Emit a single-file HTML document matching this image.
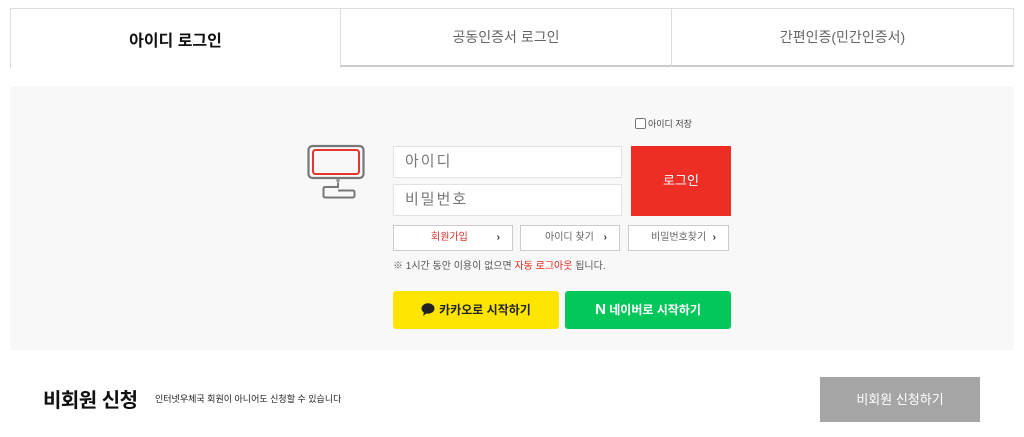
<!DOCTYPE html>
<html><head><meta charset="utf-8"><style>
*{margin:0;padding:0;box-sizing:border-box}
body{width:1024px;height:437px;background:#fff;font-family:"Liberation Sans","Noto Sans CJK KR",sans-serif;position:relative;overflow:hidden}
.a{position:absolute}
.tab{position:absolute;top:8px;height:59px;border:1px solid #ddd;display:flex;align-items:center;justify-content:center;font-size:14px;color:#666;background:#fff}
.inp{position:absolute;left:393px;width:229px;height:32px;background:#fff;border:1px solid #e2e2e2;font-size:15px;color:#777;padding-left:11px;line-height:30px;letter-spacing:2px}
.lnk{position:absolute;top:225px;height:26px;background:#fff;border:1px solid #ccc;font-size:10px;color:#666;line-height:24px}
.lnk b{position:absolute;right:12px;top:0;font-size:10px;color:#333}
</style></head><body>
<div class="tab" style="left:10px;width:331px;border-bottom:none;height:60px;color:#111;font-weight:bold;font-size:16px">아이디 로그인</div>
<div class="tab" style="left:340px;width:332px;border-bottom:2px solid #ccc">공동인증서 로그인</div>
<div class="tab" style="left:671px;width:343px;border-bottom:2px solid #ccc">간편인증(민간인증서)</div>
<div class="a" style="left:10px;top:86px;width:1004px;height:264px;background:#f8f8f8"></div>
<div class="a" style="left:635px;top:118px;width:11px;height:11px;border:1px solid #777;border-radius:2px;background:#fff"></div>
<div class="a" style="left:648px;top:117px;font-size:9px;color:#444">아이디 저장</div>
<svg class="a" style="left:300px;top:140px" width="70" height="65" viewBox="0 0 70 65">
<rect x="8.5" y="6" width="55" height="32" rx="4" fill="none" stroke="#777" stroke-width="2.2"/>
<rect x="13" y="10" width="46" height="24" rx="2.5" fill="none" stroke="#e8352c" stroke-width="2"/>
<circle cx="38" cy="40.5" r="1.8" fill="#999"/>
<path d="M38 42.5 V47 H25 a1.5 1.5 0 0 0 -1.5 1.5 V56 a1.5 1.5 0 0 0 1.5 1.5 H53 a1.5 1.5 0 0 0 1.5 -1.5 V52 a1.5 1.5 0 0 0 -1.5 -1.5 H38" fill="none" stroke="#777" stroke-width="2"/>
</svg>
<div class="inp" style="top:146px">아이디</div>
<div class="inp" style="top:184px">비밀번호</div>
<div class="a" style="left:631px;top:146px;width:100px;height:70px;background:#ee2e24;color:#fff;font-size:13px;text-align:center;line-height:70px">로그인</div>
<div class="lnk" style="left:393px;width:120px;color:#d9302a;padding-left:37px">회원가입<b>›</b></div>
<div class="lnk" style="left:520px;width:100px;padding-left:24px">아이디 찾기<b>›</b></div>
<div class="lnk" style="left:628px;width:101px;padding-left:22px">비밀번호찾기<b>›</b></div>
<div class="a" style="left:393px;top:257px;font-size:10px;color:#555">※ 1시간 동안 이용이 없으면 <span style="color:#e3261c">자동 로그아웃</span> 됩니다.</div>
<div class="a" style="left:393px;top:291px;width:166px;height:38px;background:#fee500;border-radius:3px;font-size:12px;font-weight:bold;color:#222;text-align:center;line-height:38px"><svg width="14" height="13" viewBox="0 0 14 13" style="vertical-align:-2px;margin-right:4px"><ellipse cx="7" cy="5.5" rx="6.5" ry="5.2" fill="#222"/><path d="M3 9 L2 13 L6 10Z" fill="#222"/></svg>카카오로 시작하기</div>
<div class="a" style="left:565px;top:291px;width:166px;height:38px;background:#03c75a;border-radius:3px;font-size:12px;font-weight:bold;color:#fff;text-align:center;line-height:38px"><span style="font-size:15px;font-weight:900">N</span> 네이버로 시작하기</div>
<div class="a" style="left:43px;top:384px;font-size:20px;font-weight:bold;color:#111;letter-spacing:-0.5px">비회원 신청</div>
<div class="a" style="left:155px;top:392px;font-size:9px;color:#222">인터넷우체국 회원이 아니어도 신청할 수 있습니다</div>
<div class="a" style="left:820px;top:377px;width:160px;height:45px;background:#a5a5a5;color:#fff;font-size:13px;text-align:center;line-height:45px">비회원 신청하기</div>
</body></html>
